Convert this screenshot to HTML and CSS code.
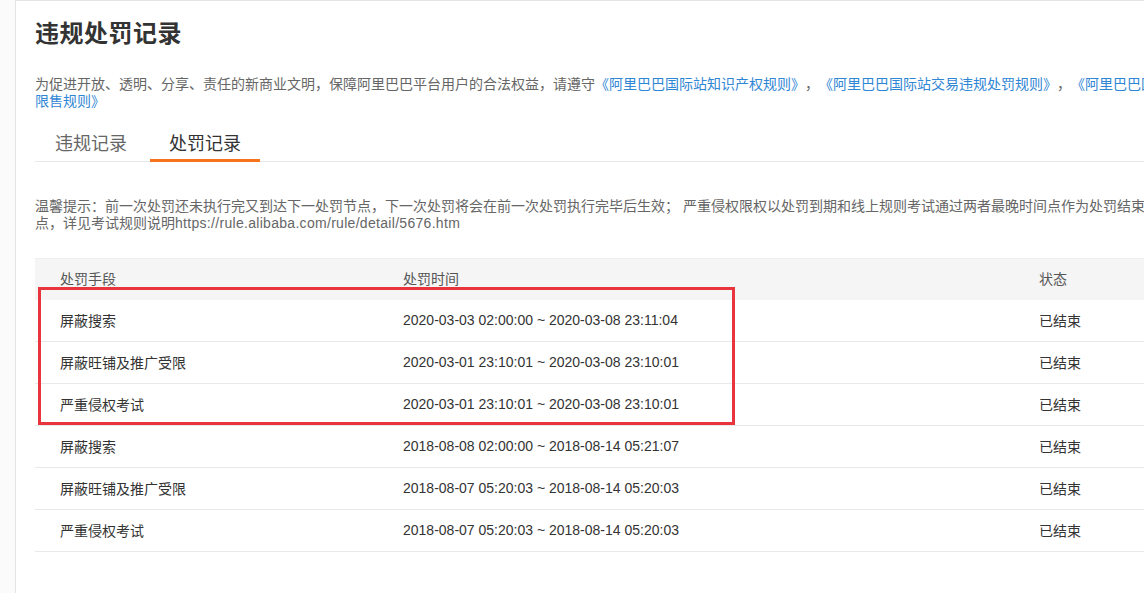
FILE: index.html
```html
<!DOCTYPE html>
<html lang="zh-CN">
<head>
<meta charset="utf-8">
<title>违规处罚记录</title>
<link rel="stylesheet" href="styles.css">
</head>
<body>
<div class="card">
  <h1 class="title">违规处罚记录</h1>
  <p class="desc">为促进开放、透明、分享、责任的新商业文明，保障阿里巴巴平台用户的合法权益，请遵守<a class="link" href="#">《阿里巴巴国际站知识产权规则》</a>，<a class="link" href="#">《阿里巴巴国际站交易违规处罚规则》</a>，<a class="link" href="#">《阿里巴巴国际站禁限售规则》</a></p>
  <div class="tabs">
    <div class="tab">违规记录</div>
    <div class="tab tab-active">处罚记录</div>
  </div>
  <p class="hint">温馨提示：前一次处罚还未执行完又到达下一处罚节点，下一次处罚将会在前一次处罚执行完毕后生效； 严重侵权限权以处罚到期和线上规则考试通过两者最晚时间点作为处罚结束时间节点，详见考试规则说明<span class="url">https://rule.alibaba.com/rule/detail/5676.htm</span></p>
  <div class="table">
    <div class="row head">
      <div class="cell">处罚手段</div>
      <div class="cell">处罚时间</div>
      <div class="cell">状态</div>
    </div>
    <div class="row">
      <div class="cell">屏蔽搜索</div>
      <div class="cell">2020-03-03 02:00:00 ~ 2020-03-08 23:11:04</div>
      <div class="cell">已结束</div>
    </div>
    <div class="row">
      <div class="cell">屏蔽旺铺及推广受限</div>
      <div class="cell">2020-03-01 23:10:01 ~ 2020-03-08 23:10:01</div>
      <div class="cell">已结束</div>
    </div>
    <div class="row">
      <div class="cell">严重侵权考试</div>
      <div class="cell">2020-03-01 23:10:01 ~ 2020-03-08 23:10:01</div>
      <div class="cell">已结束</div>
    </div>
    <div class="row">
      <div class="cell">屏蔽搜索</div>
      <div class="cell">2018-08-08 02:00:00 ~ 2018-08-14 05:21:07</div>
      <div class="cell">已结束</div>
    </div>
    <div class="row">
      <div class="cell">屏蔽旺铺及推广受限</div>
      <div class="cell">2018-08-07 05:20:03 ~ 2018-08-14 05:20:03</div>
      <div class="cell">已结束</div>
    </div>
    <div class="row">
      <div class="cell">严重侵权考试</div>
      <div class="cell">2018-08-07 05:20:03 ~ 2018-08-14 05:20:03</div>
      <div class="cell">已结束</div>
    </div>
    <div class="highlight"></div>
  </div>
</div>
</body>
</html>
```
FILE: styles.css
```css
html, body {
  margin: 0;
  padding: 0;
  overflow: hidden;
  height: 100%;
}
body {
  background: #fbfbfb;
  font-family: "Liberation Sans", "Noto Sans CJK SC", sans-serif;
  color: #333;
  text-spacing-trim: space-all;
}
.card {
  margin-left: 15px;
  width: 1190px;
  min-height: 100vh;
  box-sizing: border-box;
  background: #fff;
  border-left: 1px solid #e4e4e4;
  border-top: 1px solid #e4e4e4;
  padding: 17px 0 0 19px;
}
.title {
  margin: 0;
  font-size: 24px;
  line-height: 32px;
  font-weight: bold;
  color: #333;
  letter-spacing: 0.5px;
}
.desc {
  margin: 25.5px 0 0;
  width: 1170px;
  font-size: 14px;
  line-height: 17px;
  color: #666;
}
.link {
  color: #2f86d4;
  text-decoration: none;
}
.tabs {
  margin-top: 22.5px;
  display: flex;
  padding-left: 1px;
  border-bottom: 1px solid #e8e8e8;
  width: 1169px;
}
.tab {
  padding: 0 19px 3px;
  margin-right: 4px;
  margin-bottom: -1px;
  font-size: 18px;
  line-height: 24px;
  color: #666;
  border-bottom: 3px solid transparent;
}
.tab-active {
  color: #333;
  border-bottom-color: #f7741e;
}
.hint {
  margin: 35.5px 0 0;
  width: 1170px;
  font-size: 14px;
  line-height: 17px;
  color: #666;
}
.url {
  letter-spacing: 0.3px;
}
.table {
  position: relative;
  margin-top: 26.5px;
  width: 1170px;
}
.row {
  display: grid;
  grid-template-columns: 343px 636px 1fr;
  align-items: center;
  height: 42px;
  box-sizing: border-box;
  padding-bottom: 1px;
  border-bottom: 1px solid #e8e8e8;
  font-size: 14px;
  color: #333;
}
.row.head {
  background: #f5f5f5;
  border-top: 1px solid #eeeeee;
  border-bottom: none;
  padding-bottom: 3px;
  color: #555;
}
.cell {
  padding-left: 25px;
  white-space: nowrap;
}
.highlight {
  position: absolute;
  left: 3px;
  top: 29px;
  width: 697px;
  height: 138px;
  box-sizing: border-box;
  border: 3px solid #e8353d;
  pointer-events: none;
}
```
